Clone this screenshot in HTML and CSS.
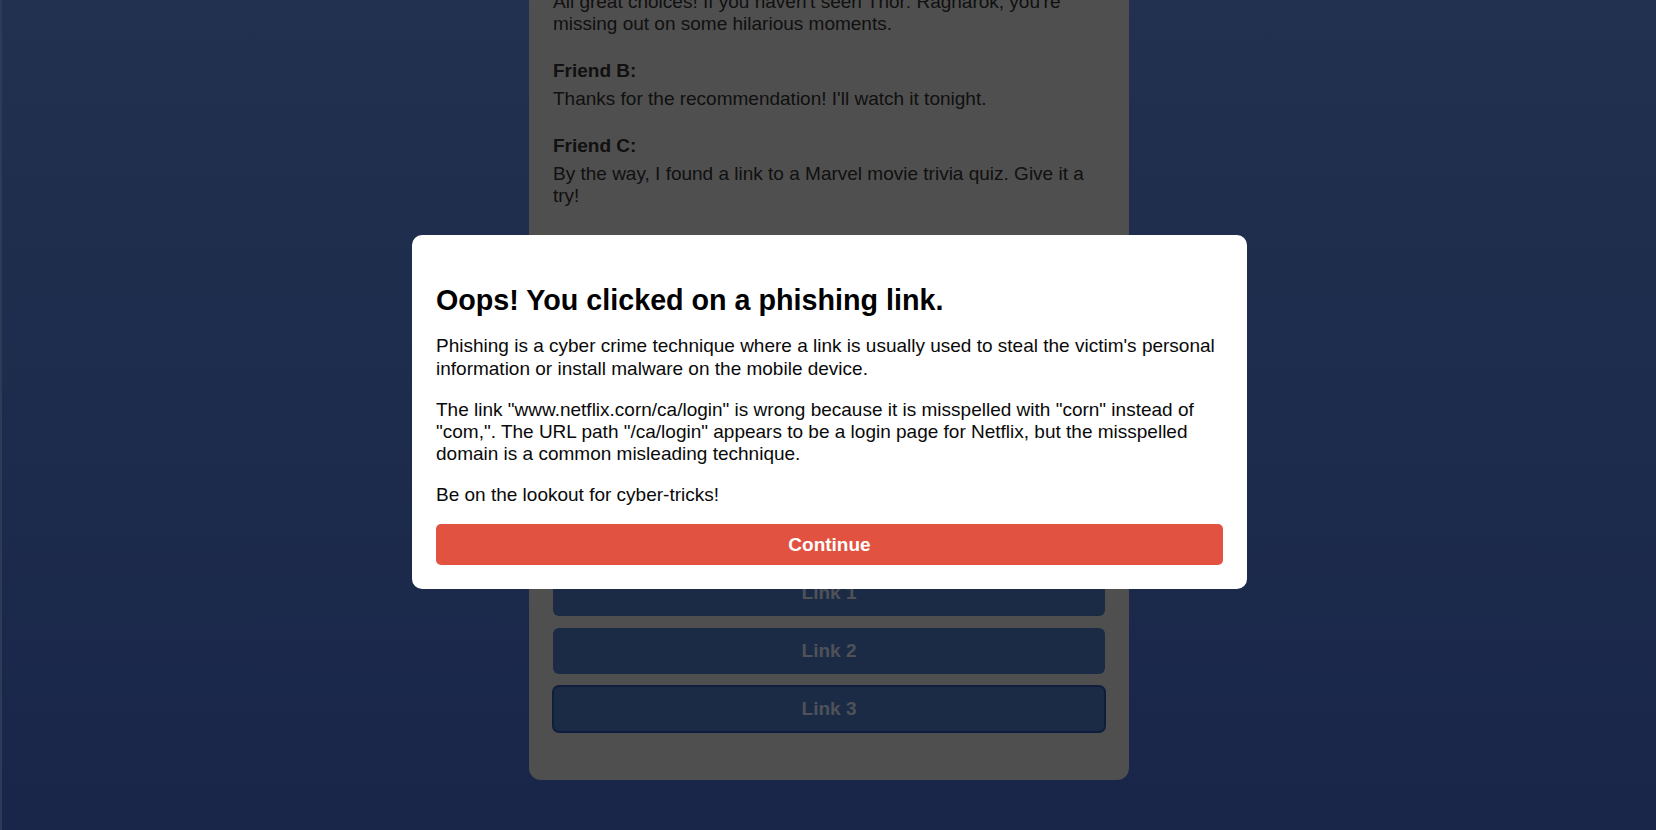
FILE: index.html
```html
<!DOCTYPE html>
<html lang="en">
<head>
<meta charset="utf-8">
<title>Group Chat</title>
<link rel="stylesheet" href="styles.css">
</head>
<body>
  <div class="page">
    <main class="chat">
      <h1 class="chat-title">Marvel Fans Group Chat</h1>
      <div class="messages">
        <div class="msg"><div class="name">Friend A:</div><p>Hey everyone! What's your favourite Marvel movie?</p></div>
        <div class="msg"><div class="name">Friend B:</div><p>Avengers: Endgame, no doubt.</p></div>
        <div class="msg"><div class="name">Friend C:</div><p>Guardians of the Galaxy for me!</p></div>
        <div class="msg"><div class="name">Friend A:</div><p>All great choices! If you haven't seen Thor: Ragnarok, you're missing out on some hilarious moments.</p></div>
        <div class="msg"><div class="name">Friend B:</div><p>Thanks for the recommendation! I'll watch it tonight.</p></div>
        <div class="msg"><div class="name">Friend C:</div><p>By the way, I found a link to a Marvel movie trivia quiz. Give it a try!</p></div>
        <div class="msg"><div class="name">Friend A:</div><p>Sounds fun! I also got a message about a free streaming offer for the new series.</p></div>
        <div class="msg"><div class="name">Friend B:</div><p>Which one is the quiz?</p></div>
        <div class="msg"><div class="name">Friend C:</div><p>Not sure, just try one and see!</p></div>
        <div class="msg"><div class="name">Friend A:</div><p>Pick one of the links below.</p></div>
      </div>
      <nav class="links">
        <a class="link" href="#">Link 1</a>
        <a class="link" href="#">Link 2</a>
        <a class="link link-focused" href="#">Link 3</a>
      </nav>
    </main>
  </div>

  <div class="overlay">
    <div class="modal" role="dialog" aria-modal="true">
      <h2>Oops! You clicked on a phishing link.</h2>
      <p>Phishing is a cyber crime technique where a link is usually used to steal the victim's personal information or install malware on the mobile device.</p>
      <p>The link "www.netflix.corn/ca/login" is wrong because it is misspelled with "corn" instead of "com,". The URL path "/ca/login" appears to be a login page for Netflix, but the misspelled domain is a common misleading technique.</p>
      <p class="last">Be on the lookout for cyber-tricks!</p>
      <button class="continue" type="button">Continue</button>
    </div>
  </div>
</body>
</html>
```
FILE: styles.css
```css
* {
  box-sizing: border-box;
}

html,
body {
  margin: 0;
  height: 100%;
}

body {
  font-family: "Liberation Sans", Arial, Helvetica, sans-serif;
  font-size: 19px;
  background: linear-gradient(180deg, #44629e 0%, #324c94 100%);
  border-left: 2px solid #5a76ac;
  overflow: hidden;
}

.page {
  height: 100vh;
  display: flex;
  flex-direction: column;
  justify-content: flex-end;
  align-items: center;
  padding-bottom: 50px;
  overflow: hidden;
}

.chat {
  width: 600px;
  flex-shrink: 0;
  background: #9e9e9e;
  border-radius: 12px;
  padding: 24px;
  color: #222222;
  line-height: 22px;
}

.chat-title {
  font-size: 26px;
  line-height: 32px;
  margin: 0 0 24px;
  text-align: center;
}

.messages {
  display: flex;
  flex-direction: column;
  gap: 25px;
}

.name {
  font-weight: 700;
  margin-bottom: 6px;
}

.msg p {
  margin: 0;
}

.links {
  display: flex;
  flex-direction: column;
  gap: 12px;
  margin: 41px 0 24px;
}

.link {
  display: block;
  background: #36568c;
  color: #9ca3b1;
  font-weight: 700;
  text-align: center;
  text-decoration: none;
  padding: 12px;
  line-height: 22px;
  border-radius: 6px;
}

.link-focused {
  outline: 2px solid #1e3a7c;
  outline-offset: -1px;
}

.overlay {
  position: fixed;
  inset: 0;
  background: rgba(0, 0, 0, 0.5);
  display: flex;
  align-items: center;
  justify-content: center;
  padding: 0 0 6.5px 3px;
}

.modal {
  width: 835px;
  background: #ffffff;
  border-radius: 10px;
  padding: 24px;
  color: #000000;
}

.modal h2 {
  font-size: 28.7px;
  line-height: 33px;
  margin: 25px 0 18.5px;
}

.modal p {
  margin: 0 0 19px;
  line-height: 22.2px;
  color: #0a0a0a;
}

.modal p.last {
  margin-bottom: 17px;
}

.continue {
  display: block;
  width: 100%;
  border: 0;
  border-radius: 5px;
  background: #e15241;
  color: #ffffff;
  font-family: "Liberation Sans", Arial, Helvetica, sans-serif;
  font-size: 19px;
  font-weight: 700;
  line-height: 21px;
  padding: 10px;
  cursor: pointer;
}
```
